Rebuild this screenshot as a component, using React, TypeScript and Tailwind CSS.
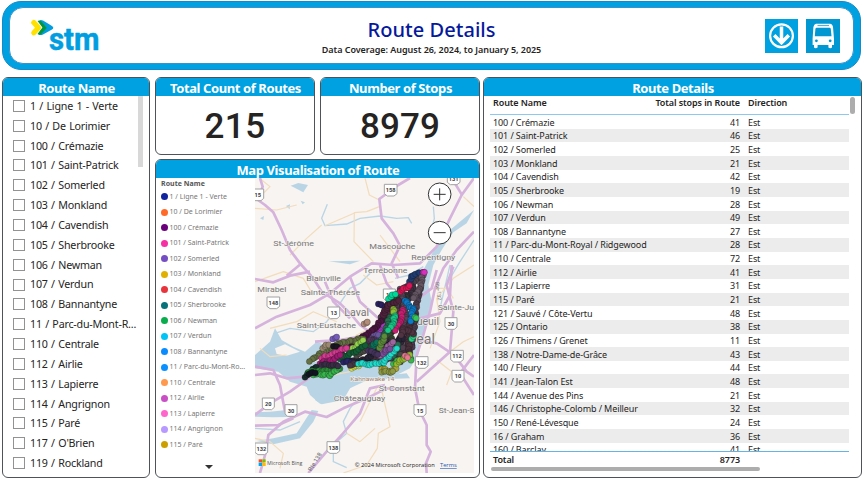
import type { ReactNode } from "react";

const sans = "font-['Noto_Sans','Open_Sans',sans-serif]";

const slicer = [
  "1 / Ligne 1 - Verte", "10 / De Lorimier", "100 / Crémazie", "101 / Saint-Patrick", "102 / Somerled",
  "103 / Monkland", "104 / Cavendish", "105 / Sherbrooke", "106 / Newman", "107 / Verdun", "108 / Bannantyne",
  "11 / Parc-du-Mont-R...", "110 / Centrale", "112 / Airlie", "113 / Lapierre", "114 / Angrignon", "115 / Paré",
  "117 / O'Brien", "119 / Rockland",
];

const legend: [string, string][] = [
  ["1 / Ligne 1 - Verte", "#12239e"], ["10 / De Lorimier", "#ff6a28"], ["100 / Crémazie", "#6b007b"],
  ["101 / Saint-Patrick", "#f72fa4"], ["102 / Somerled", "#744ec2"], ["103 / Monkland", "#e0b000"],
  ["104 / Cavendish", "#e8343c"], ["105 / Sherbrooke", "#077279"], ["106 / Newman", "#0aad4d"],
  ["107 / Verdun", "#00c4f5"], ["108 / Bannantyne", "#0a8cff"], ["11 / Parc-du-Mont-Ro...", "#0a90ff"],
  ["110 / Centrale", "#ff994d"], ["112 / Airlie", "#c94fc4"], ["113 / Lapierre", "#ff66cc"],
  ["114 / Angrignon", "#b799ff"], ["115 / Paré", "#cc9f00"],
];

const rows: [string, number][] = [
  ["100 / Crémazie", 41], ["101 / Saint-Patrick", 46], ["102 / Somerled", 25], ["103 / Monkland", 21],
  ["104 / Cavendish", 42], ["105 / Sherbrooke", 19], ["106 / Newman", 28], ["107 / Verdun", 49],
  ["108 / Bannantyne", 27], ["11 / Parc-du-Mont-Royal / Ridgewood", 28], ["110 / Centrale", 72],
  ["112 / Airlie", 41], ["113 / Lapierre", 31], ["115 / Paré", 21], ["121 / Sauvé / Côte-Vertu", 48],
  ["125 / Ontario", 38], ["126 / Thimens / Grenet", 11], ["138 / Notre-Dame-de-Grâce", 43],
  ["140 / Fleury", 44], ["141 / Jean-Talon Est", 48], ["144 / Avenue des Pins", 21],
  ["146 / Christophe-Colomb / Meilleur", 32], ["150 / René-Lévesque", 24], ["16 / Graham", 36], ["160 / Barclay", 41],
];

function Panel({ title, className, children }: { title: string; className: string; children: ReactNode }) {
  return (
    <section className={`flex flex-col overflow-hidden rounded-[6px] border border-[#4d5358] bg-white ${className}`}>
      <h2 className="flex h-[18px] shrink-0 items-center justify-center bg-[#00a1e0] pl-px text-[13px] leading-none font-bold tracking-[-0.4px] whitespace-nowrap text-white">
        <span className="pt-[3px]">{title}</span>
      </h2>
      {children}
    </section>
  );
}

function Logo() {
  return (
    <svg width="74" height="38" viewBox="30 18 74 38">
      <path d="M33.8 23.6 L38.5 28.7 L33.8 33.8" fill="none" stroke="#ffe100" strokeWidth="5.2" strokeLinecap="round" strokeLinejoin="round" />
      <path d="M39.5 21.4 Q41 20.6 43 21.6 L52 27 Q54.6 28.8 52 30.6 L43 35.6 Q40 36.8 38.6 35.2 L46.5 28.6 Z" fill="#009ee0" />
      <path d="M37.6 22 Q39.5 20.6 41.5 22.4 L47 28.8 L41.3 35 Q39.4 36.6 37.5 35 L42.4 28.6 Z" fill="#009640" />
      <text x="49" y="50.8" fontFamily="Roboto, sans-serif" fontWeight="700" fontSize="31.5" fill="#009ee0" stroke="#009ee0" strokeWidth=".5" strokeLinejoin="round" textLength="50.5" lengthAdjust="spacingAndGlyphs">stm</text>
    </svg>
  );
}

function MetroIcon() {
  return (
    <svg width="33" height="34" viewBox="0 0 33 34">
      <rect width="33" height="34" fill="#00a1e0" />
      <circle cx="16.5" cy="16.8" r="11.4" fill="none" stroke="#fff" strokeWidth="2.2" />
      <path d="M16.5 7.5V23.5M9.2 16.3L16.5 23.8L23.8 16.3" fill="none" stroke="#fff" strokeWidth="3.5" />
    </svg>
  );
}

function BusIcon() {
  return (
    <svg width="34" height="34" viewBox="0 0 34 34">
      <rect width="34" height="34" fill="#0097d3" />
      <path d="M10 4.8H24Q26.5 5 27 8L28 20V26H26V28.5Q24.2 29.8 22.4 28.5V26H11.6V28.5Q9.8 29.8 8 28.5V26H6.6V20L7.4 8Q8 5 10 4.8Z" fill="#fff" />
      <path d="M10.6 8.7H23.6Q24.6 8.8 24.8 10L25.5 17.2H8.8L9.4 10Q9.6 8.8 10.6 8.7Z" fill="#0097d3" />
      <path d="M11.5 6.6H23" stroke="#0097d3" strokeWidth=".8" />
      <circle cx="10.4" cy="21.8" r="1.4" fill="#0097d3" />
      <circle cx="24.2" cy="21.8" r="1.4" fill="#0097d3" />
    </svg>
  );
}

const waters = [
  "M672 165L650 205L610 232L575 285L550 330L535 390L545 440L528 510L505 600L480 640L430 665L380 662L300 700L280 735L215 748L195 735L215 700L155 660L165 630L260 600L420 620L490 540L510 450L520 345L560 270L600 225Z",
  "M15 600L60 560L75 520L95 555L130 575L165 590L200 560L250 580L180 625L165 660L300 650L400 662L470 655L480 670L330 675L300 700L275 735L210 746L180 720L170 695L120 680L85 650L15 640Z",
  "M122 92L145 84L174 90L160 112Z", "M108 153L120 148L119 163Z", "M152 137L165 142L158 148Z", "M30 190L42 183L40 195Z",
  "M236 319L330 317L300 328Z", "M15 772L60 770L110 765L140 785L70 787L15 785Z",
  "M185 765L205 768L190 800L150 850L70 868L20 858L70 850L140 835Z",
];
const streams = [
  "M232 148L215 190L225 212L290 207L330 190L390 183L440 190L475 188L485 205",
  "M550 155L553 190L545 225L550 260", "M370 345L330 385L300 400L260 460L230 500L190 530L120 520L75 535",
  "M325 730L300 760L280 800L290 835L250 870L250 920L290 938",
  "M672 255L630 320L600 370", "M15 820L90 825L150 800", "M600 330L570 460", "M435 370L480 360L520 335",
];
const minor = [
  "M35 75L60 95L25 130", "M15 160L80 165L140 150", "M345 69L358 120L388 135", "M388 155L350 170L313 173L312 260L370 320",
  "M215 210L170 250L120 300", "M225 212L312 175", "M390 240L450 320", "M640 125L672 155", "M672 330L610 370L560 430L570 500L540 580",
  "M15 380L100 350L160 370L190 420", "M60 520L140 500L190 470L260 500", "M600 590L640 560L672 545", "M560 615L605 650L590 690",
  "M380 700L350 760L330 800", "M395 705L420 815L385 835L382 880L350 930L280 954", "M290 835L330 860L375 820",
  "M15 850L60 860L100 895L90 940", "M540 400L590 400L610 430", "M200 640L250 660L300 650", "M300 560L320 540L360 520",
  "M30 580L60 605L110 600", "M340 360L380 390L430 380",
];
const majors = [
  "M30 69L38 95L24 135L45 150L70 172L95 225L120 285L150 325L190 370L215 410L270 445L305 480L330 510L400 560",
  "M480 69L445 90L388 132L395 190L430 235L450 272L425 325L445 370",
  "M672 69L635 120L600 190L560 275L510 325L430 330L365 325L300 365L240 415L180 450L80 485L15 520",
  "M605 69L635 118", "M110 362L155 325", "M15 372L70 382L120 362L180 350",
  "M672 230L620 285L580 340L555 400L540 470L520 540L500 600L495 700L410 700L350 730L280 760L230 786L165 770L100 800L55 840L48 890L30 954",
  "M605 330L600 420L570 475L510 490L450 540", "M480 550L560 565L612 600L650 650L672 665", "M610 335L590 390L610 470L600 590L500 680",
  "M495 700L508 765L530 810L530 870L542 890L528 925L530 954",
  "M405 690L360 700L330 775L275 840L225 895L175 954", "M15 635L70 645L90 690L105 770", "M15 780L60 745L120 710L190 660",
  "M15 660L60 655L110 670L165 665", "M672 600L630 655L672 720", "M300 365L330 440L385 490", "M15 812L85 810L130 790",
  "M195 560L270 555L330 545", "M225 380L250 440L300 490", "M390 330L410 385L440 420", "M560 345L545 400L505 430",
];

type Chain = [string, ...number[]];
const chains: Chain[] = [
  ["#44384c", 500, 410, 440, 430, 405, 470, 390, 520, 370, 545, 320, 580], ["#3a3040", 470, 440, 440, 500, 410, 560, 360, 600],
  ["#4a3a50", 485, 520, 470, 580, 430, 610, 380, 615], ["#352b3c", 455, 560, 400, 600, 300, 625],
  ["#4b3f4d", 515, 365, 460, 400, 420, 440, 395, 485, 400, 545, 360, 590], ["#3c3140", 490, 395, 470, 445, 430, 480, 415, 550],
  ["#4e4050", 512, 395, 500, 445, 492, 515, 485, 570, 450, 610], ["#343434", 470, 420, 430, 520, 395, 590, 340, 620],
  ["#2b2160", 385, 445, 410, 460, 450, 470, 460, 540, 400, 610], ["#543b53", 430, 440, 460, 500, 485, 575, 450, 620],
  ["#39463a", 400, 500, 370, 560, 330, 590, 300, 590], ["#472c55", 390, 520, 420, 560, 440, 600],
  ["#43303b", 495, 480, 460, 530, 430, 590, 370, 610], ["#503d4e", 375, 540, 400, 570, 460, 580],
  ["#272337", 280, 615, 340, 620, 390, 580, 460, 550], ["#513557", 350, 560, 410, 540, 430, 500],
  ["#33462f", 440, 420, 410, 500, 430, 570, 395, 630], ["#564658", 450, 400, 470, 480, 455, 530],
  ["#4a4946", 320, 600, 370, 570, 410, 580, 450, 600], ["#49313c", 480, 500, 475, 560, 480, 610],
  ["#6f2d7c", 395, 550, 375, 570], ["#2c6a52", 430, 600, 445, 570], ["#8a3a80", 400, 605, 420, 590], ["#7a1e5a", 420, 455, 400, 480],
  ["#a63bc0", 385, 530, 400, 510], ["#6b579e", 360, 535, 385, 538], ["#247052", 420, 485, 405, 535, 390, 565],
  ["#203d73", 478, 378, 490, 360, 518, 350], ["#665765", 520, 355, 510, 400, 490, 430],
  ["#dc1456", 450, 408, 480, 393], ["#00d89a", 415, 430, 435, 417], ["#4e233c", 400, 480, 415, 450, 445, 438],
  ["#8dbc35", 430, 460, 432, 473], ["#0b7bc8", 465, 435, 480, 455, 488, 462, 482, 500],
  ["#c81e72", 458, 462, 452, 500, 435, 525], ["#18c787", 435, 480, 430, 505, 416, 525],
  ["#4c1740", 395, 495, 375, 520, 340, 545, 300, 575, 240, 600], ["#b18d79", 342, 505, 354, 503],
  ["#667144", 340, 550, 270, 565, 220, 590, 180, 618], ["#9a8970", 218, 578, 235, 569], ["#765bbb", 248, 550, 262, 548],
  ["#181620", 250, 572, 270, 580], ["#93d44c", 300, 590, 340, 555], ["#d53b91", 215, 608, 240, 600, 290, 578],
  ["#9e65a0", 390, 600, 430, 560], ["#125d35", 270, 610, 320, 588, 345, 570], ["#0b7358", 365, 580, 380, 560],
  ["#a31b75", 210, 624, 250, 615, 270, 598], ["#45345e", 355, 585, 385, 600], ["#292566", 280, 620, 310, 622],
  ["#172b2a", 165, 665, 200, 635], ["#2b8f38", 175, 650, 215, 648, 270, 640], ["#38b54c", 190, 658, 240, 660, 265, 640],
  ["#382d45", 215, 628, 265, 632], ["#d5df42", 305, 638, 325, 632], ["#463644", 325, 625, 300, 630],
  ["#20dccb", 325, 625, 360, 628, 400, 622, 425, 595, 442, 580], ["#7a4d98", 400, 595, 420, 580],
  ["#39b84a", 430, 625, 470, 605, 485, 615], ["#a9a536", 395, 640, 420, 650, 440, 640], ["#92ba2f", 440, 625, 480, 598],
  ["#8d9842", 395, 650, 430, 650], ["#e7798e", 465, 600, 475, 610], ["#23d083", 485, 550, 492, 540],
  ["#513442", 490, 535, 460, 520, 455, 540], ["#5c8b3a", 388, 577, 405, 545], ["#111521", 176, 655, 195, 653],
  ["#35c65b", 495, 485, 497, 490], ["#d630bd", 520, 350, 522, 352],
];

function plot(chain: Chain) {
  const [color, ...p] = chain;
  const points: { x: number; y: number; color: string }[] = [];
  for (let i = 0; i + 3 < p.length; i += 2) {
    const dx = p[i + 2] - p[i];
    const dy = p[i + 3] - p[i + 1];
    const n = Math.max(1, Math.round(Math.hypot(dx, dy) / 7));
    for (let k = 0; k <= n; k++) {
      points.push({ x: p[i] + (dx * k) / n + Math.sin(i * 5 + k * 2.3) * 2, y: p[i + 1] + (dy * k) / n + Math.cos(k * 1.7) * 2, color });
    }
  }
  return points;
}
const stops = chains.flatMap(plot);

const towns: [string, number, number, number, number][] = [
  ["St-Jérôme", 70, 274, 24, 122], ["Mascouche", 358, 283, 24, 138], ["Repentigny", 484, 315, 24, 132],
  ["Terrebonne", 340, 355, 24, 132], ["Blainville", 169, 378, 24, 104], ["Mirabel", 22, 410, 24, 87],
  ["Sainte-Thérèse", 152, 421, 24, 178], ["Laval", 283, 484, 30, 74], ["Saint-Eustache", 140, 518, 24, 178],
  ["Sainte-Ju", 563, 466, 24, 109], ["ueuil", 500, 511, 30, 67], ["eal", 499, 566, 42, 56],
  ["St Constant", 386, 708, 24, 138], ["Châteauguay", 251, 739, 24, 155], ["St-Jean-S", 566, 773, 24, 108],
];
const shields: [string, number, number][] = [
  ["15", 23, 120], ["158", 422, 106], ["131", 611, 72], ["148", 70, 444], ["13", 251, 474], ["13", 418, 420], ["30", 603, 506],
  ["132", 515, 623], ["112", 621, 604], ["10", 624, 664], ["20", 55, 747], ["30", 123, 767], ["15", 510, 767], ["132", 34, 882], ["138", 250, 878],
];

function RouteMap() {
  return (
    <svg width="219" height="295" viewBox="15 69 657 885" className="shrink-0" fontFamily="Roboto, sans-serif">
      <rect x="15" y="69" width="657" height="885" fill="#f7f4f1" />
      <g fill="#b9d5e5">{waters.map((d) => <path key={d} d={d} />)}</g>
      <path d="M75 580L105 568L150 590L110 602L80 597Z" fill="#f7f4f1" />
      <g fill="none" stroke="#b9d5e5" strokeWidth="4">{streams.map((d) => <path key={d} d={d} />)}</g>
      <g fill="none" stroke="#f3dcba" strokeWidth="3.5" strokeLinejoin="round">{minor.map((d) => <path key={d} d={d} />)}</g>
      <g fill="none" stroke="#d5b3dc" strokeWidth="8" strokeLinejoin="round">{majors.map((d) => <path key={d} d={d} />)}</g>
      <g fontSize="17" fontWeight="700" fill="#3b3b3b" textAnchor="middle">
        {shields.map(([label, x, y]) => {
          const w = label.length > 2 ? 19 : 18;
          return (
            <g key={`${label}-${x}`}>
              <path d={`M${x - w} ${y - 18}H${x + w}V${y + 10}L${x + 10} ${y + 17}H${x - 10}L${x - w} ${y + 10}Z`} fill="#fff" stroke="#a2a2a2" strokeWidth="3" />
              <text x={x} y={y + 6}>{label}</text>
            </g>
          );
        })}
      </g>
      <g fill="#777" stroke="#f7f4f1" strokeWidth="3" paintOrder="stroke">
        {towns.map(([name, x, y, size, w]) => <text key={name} x={x} y={y} fontSize={size} textLength={w} lengthAdjust="spacingAndGlyphs">{name}</text>)}
        <text x="301" y="679" fontSize="18" textLength="132" lengthAdjust="spacingAndGlyphs" fill="#9a8170">Kahnawake 14</text>
      </g>
      <text transform="translate(556 382) rotate(82)" fontSize="16" fill="#777">Rte-132</text>
      <text transform="translate(184 950) rotate(-59)" fontSize="18" fill="#666">Rte 138</text>
      <g stroke="#111" strokeOpacity=".4" strokeWidth="2">
        {stops.map((s, i) => <circle key={i} cx={s.x} cy={s.y} r="9" fill={s.color} />)}
      </g>
      <g stroke="#333" strokeWidth="3" fill="#fff">
        <circle cx="569" cy="118" r="34" /><circle cx="569" cy="233" r="34" />
        <path d="M551 118H587M569 100V136M551 233H587" />
      </g>
      <path d="M26 913H36V922H26Z" fill="#f25022" /><path d="M37 913H47V922H37Z" fill="#7fba00" />
      <path d="M26 923H36V933H26Z" fill="#00a4ef" /><path d="M37 923H47V933H37Z" fill="#ffb900" />
      <g fontFamily="Open Sans, sans-serif" fontSize="18" fill="#555">
        <text x="51" y="930" textLength="106" lengthAdjust="spacingAndGlyphs">Microsoft Bing</text>
        <text x="314" y="936" textLength="240" lengthAdjust="spacingAndGlyphs" fill="#222">© 2024 Microsoft Corporation</text>
        <text x="570" y="936" textLength="50" lengthAdjust="spacingAndGlyphs" fill="#2456b0" textDecoration="underline">Terms</text>
      </g>
    </svg>
  );
}

export default function App() {
  return (
    <main className={`flex h-[478px] w-[862px] flex-col overflow-hidden bg-white pt-px pl-[2px] text-[#252423] ${sans}`}>
      <header className="h-[69px] w-[859px] shrink-0 rounded-[19px] border border-[#1789c9] bg-[#00a1e0] px-[6px] py-[5px]">
        <div className="flex h-[57px] items-center justify-between rounded-[14px] border border-[#3c91cc] bg-white pr-[13px] pl-[20px]">
          <div className="w-[75px]"><Logo /></div>
          <div className="flex flex-col items-center pt-[3px] pr-[7px]">
            <h1 className="text-[20px] leading-[24px] font-medium tracking-[0.05px] whitespace-nowrap text-[#06199c]">Route Details</h1>
            <p className="pt-px text-[9px] leading-[14px] font-semibold tracking-[-0.04px] whitespace-nowrap">Data Coverage: August 26, 2024, to January 5, 2025</p>
          </div>
          <div className="flex gap-[8px]"><MetroIcon /><BusIcon /></div>
        </div>
      </header>
      <div className="flex pt-[7px]">
        <Panel title="Route Name" className="mr-[5px] h-[401px] w-[148px]">
          <div className="flex min-h-0 flex-1 justify-between pr-[6px] pl-[10px]">
            <ul>
              {slicer.map((name) => (
                <li key={name} className="flex h-[19.85px] items-center gap-[5px] text-[10.7px] tracking-[-0.2px] [word-spacing:0.8px] whitespace-nowrap">
                  <span className="size-[12px] shrink-0 border border-[#929292]" />
                  {name}
                </li>
              ))}
            </ul>
            <div className="h-[71px] w-[5px] bg-[#d8d8d8]" />
          </div>
        </Panel>
        <div className="mr-[3px] flex w-[325px] flex-col gap-[4px]">
          <div className="flex gap-[5px]">
            <Panel title="Total Count of Routes" className="h-[78px] w-[160px]">
              <p className="pt-[7px] text-center font-['Roboto',sans-serif] text-[35px] leading-[48px] font-medium tracking-[0.5px]">215</p>
            </Panel>
            <Panel title="Number of Stops" className="h-[78px] w-[160px]">
              <p className="pt-[7px] text-center font-['Roboto',sans-serif] text-[35px] leading-[48px] font-medium tracking-[0.1px]">8979</p>
            </Panel>
          </div>
          <Panel title="Map Visualisation of Route" className="h-[319px] w-[325px]">
            <div className="flex">
              <div className="flex w-[99px] flex-col pt-px pl-[5px] text-[7px] text-[#777] whitespace-nowrap">
                <h3 className="h-[10px] leading-[9px] font-bold tracking-[0.05px] text-[#555]">Route Name</h3>
                <ul>
                  {legend.map(([name, color]) => (
                    <li key={name} className="flex h-[15.5px] items-center gap-[1.5px]">
                      <svg width="7" height="7" className="shrink-0"><circle cx="3.5" cy="3.5" r="3.5" fill={color} /></svg>
                      {name}
                    </li>
                  ))}
                </ul>
                <svg width="8" height="4" className="mt-[12px] ml-[44px]"><path d="M0 0H8L4 4Z" fill="#333" /></svg>
              </div>
              <RouteMap />
            </div>
          </Panel>
        </div>
        <Panel title="Route Details" className="h-[401px] w-[379px]">
          <div className="flex flex-1 justify-between pr-[6px] pl-[6px]">
            <div className="w-[359px] text-[9px] tracking-[-0.1px] whitespace-nowrap">
              <div className="flex h-[19px] border-b border-[#8ec8ef] pl-[3px] leading-[14px] font-semibold">
                <span className="w-[140px]">Route Name</span>
                <span className="w-[107px] text-right">Total stops in Route</span>
                <span className="pl-[8px]">Direction</span>
              </div>
              <div className="h-[337px] overflow-hidden border-b border-[#62b5e5]">
                {rows.map(([name, count]) => (
                  <div key={name} className="flex h-[13.66px] items-center pt-px pl-[3px] even:bg-[#ececec]">
                    <span className="w-[200px]">{name}</span>
                    <span className="w-[47px] text-right">{count}</span>
                    <span className="pl-[8px]">Est</span>
                  </div>
                ))}
              </div>
              <div className="flex h-[15px] items-center pl-[3px] font-semibold">
                <span className="w-[200px]">Total</span>
                <span className="w-[47px] text-right">8773</span>
              </div>
              <div className="ml-px h-[4px] w-[269px] rounded-full bg-[#adadad]" />
            </div>
            <div className="mt-px h-[17px] w-[5px] rounded-full bg-[#adadad]" />
          </div>
        </Panel>
      </div>
    </main>
  );
}
